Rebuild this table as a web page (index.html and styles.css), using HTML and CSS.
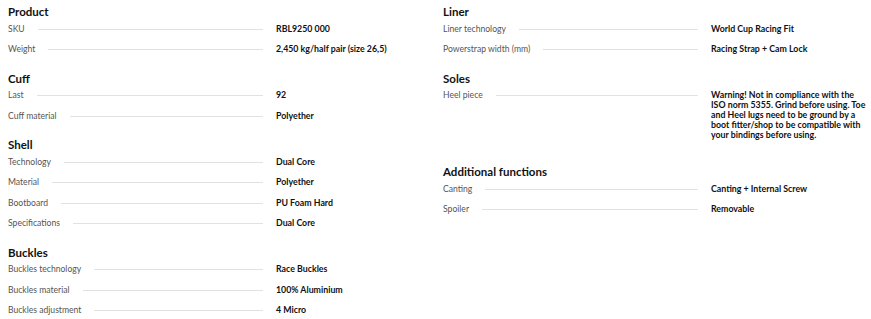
FILE: index.html
```html
<!DOCTYPE html>
<html lang="en">
<head>
<meta charset="utf-8">
<title>Specifications</title>
<link rel="stylesheet" href="styles.css">
</head>
<body>
<div class="specs">
  <div class="col">
    <section class="group">
      <h3 class="group-title">Product</h3>
      <div class="row"><span class="label">SKU</span><span class="rule"></span><span class="value">RBL9250 000</span></div>
      <div class="row"><span class="label">Weight</span><span class="rule"></span><span class="value">2,450 kg/half pair (size 26,5)</span></div>
    </section>
    <section class="group">
      <h3 class="group-title">Cuff</h3>
      <div class="row"><span class="label">Last</span><span class="rule"></span><span class="value">92</span></div>
      <div class="row"><span class="label">Cuff material</span><span class="rule"></span><span class="value">Polyether</span></div>
    </section>
    <section class="group">
      <h3 class="group-title">Shell</h3>
      <div class="row"><span class="label">Technology</span><span class="rule"></span><span class="value">Dual Core</span></div>
      <div class="row"><span class="label">Material</span><span class="rule"></span><span class="value">Polyether</span></div>
      <div class="row"><span class="label">Bootboard</span><span class="rule"></span><span class="value">PU Foam Hard</span></div>
      <div class="row"><span class="label">Specifications</span><span class="rule"></span><span class="value">Dual Core</span></div>
    </section>
    <section class="group">
      <h3 class="group-title">Buckles</h3>
      <div class="row"><span class="label">Buckles technology</span><span class="rule"></span><span class="value">Race Buckles</span></div>
      <div class="row"><span class="label">Buckles material</span><span class="rule"></span><span class="value">100% Aluminium</span></div>
      <div class="row"><span class="label">Buckles adjustment</span><span class="rule"></span><span class="value">4 Micro</span></div>
    </section>
  </div>
  <div class="col">
    <section class="group">
      <h3 class="group-title">Liner</h3>
      <div class="row"><span class="label">Liner technology</span><span class="rule"></span><span class="value">World Cup Racing Fit</span></div>
      <div class="row"><span class="label">Powerstrap width (mm)</span><span class="rule"></span><span class="value">Racing Strap + Cam Lock</span></div>
    </section>
    <section class="group">
      <h3 class="group-title">Soles</h3>
      <div class="row row--multi"><span class="label">Heel piece</span><span class="rule"></span><span class="value">Warning! Not in compliance with the ISO norm 5355. Grind before using. Toe and Heel lugs need to be ground by a boot fitter/shop to be compatible with your bindings before using.</span></div>
    </section>
    <section class="group">
      <h3 class="group-title">Additional functions</h3>
      <div class="row"><span class="label">Canting</span><span class="rule"></span><span class="value">Canting + Internal Screw</span></div>
      <div class="row"><span class="label">Spoiler</span><span class="rule"></span><span class="value">Removable</span></div>
    </section>
  </div>
</div>
</body>
</html>
```
FILE: styles.css
```css
* { box-sizing: border-box; }
html, body { margin: 0; padding: 0; background: #fff; }
body {
  font-family: "Lato", "Noto Sans", sans-serif;
  color: #111;
  padding: 5px 4px 0 8px;
}
.specs {
  display: grid;
  grid-template-columns: 1fr 1fr;
  column-gap: 11px;
}
.group { margin-bottom: 11.5px; }
.group-title {
  margin: 0;
  font-size: 11.5px;
  line-height: 14px;
  font-weight: 700;
  color: #111;
}
.row {
  display: grid;
  grid-template-columns: auto 1fr 156px;
  column-gap: 13px;
  align-items: start;
  padding: 4.5px 0 6px;
}
.row--multi { padding-bottom: 13.5px; }
.label {
  font-size: 8.6px;
  line-height: 10px;
  color: #555;
  white-space: nowrap;
}
.rule {
  height: 1px;
  background: #e2e2e2;
  margin-top: 5px;
}
.value {
  font-size: 8.8px;
  line-height: 10px;
  font-weight: 700;
  color: #111;
}
```
